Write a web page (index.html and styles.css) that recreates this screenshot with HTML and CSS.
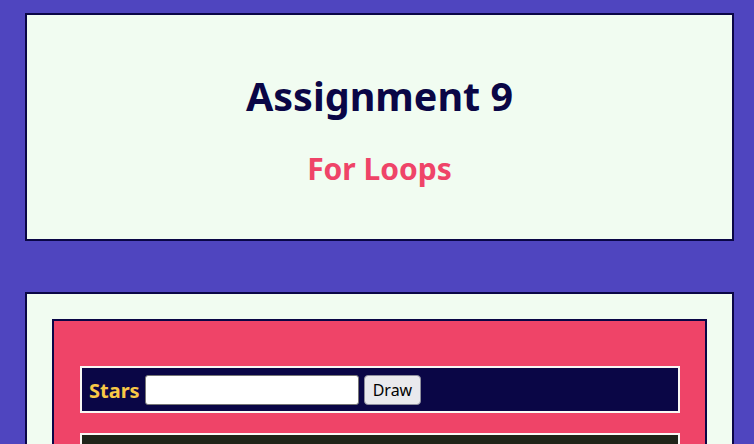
FILE: index.html
```html
<!DOCTYPE html>
<html lang="en">
<head>
<meta charset="utf-8">
<title>Assignment 9</title>
<link rel="stylesheet" href="styles.css">
</head>
<body>
  <header class="card header">
    <h1 class="title">Assignment 9</h1>
    <h2 class="subtitle">For Loops</h2>
  </header>
  <main class="card content">
    <section class="panel">
      <div class="bar bar-controls">
        <label class="label" for="stars">Stars</label>
        <input class="field" id="stars" type="text">
        <button class="btn" type="button">Draw</button>
      </div>
      <div class="bar bar-output"></div>
    </section>
  </main>
</body>
</html>
```

FILE: styles.css
```css
html, body {
  margin: 0;
}
body {
  background: #4f45bf;
  padding: 13px 20px 0 25px;
  font-family: "Noto Sans", "Open Sans", sans-serif;
}
.card {
  border: 2px solid #0a0646;
  background: #f1fcf1;
}
.header {
  box-sizing: border-box;
  height: 228px;
  text-align: center;
  padding-top: 54px;
}
.title {
  margin: 0;
  font-size: 39.5px;
  line-height: 54px;
  font-weight: 700;
  color: #0a0646;
}
.subtitle {
  margin: 27px 0 0;
  font-size: 30px;
  line-height: 38px;
  font-weight: 700;
  color: #ef4468;
}
.content {
  margin-top: 51px;
  padding: 25px;
}
.panel {
  background: #ef4468;
  border: 2px solid #0a0646;
  padding: 25px 25px 25px 26px;
}
.bar {
  border: 2px solid #f8f8f4;
  margin: 20px 0;
}
.bar-controls {
  background: #0a0646;
  display: flex;
  align-items: center;
  gap: 5px;
  padding: 7px 7px 6px 7px;
}
.bar-output {
  background: #1f2419;
  height: 200px;
}
.label {
  color: #f9c846;
  font-weight: 700;
  font-size: 20px;
}
.field {
  box-sizing: border-box;
  width: 214px;
  height: 30px;
  border: 1px solid #767676;
  border-radius: 3px;
  background: #fff;
  margin: 0;
}
.btn {
  box-sizing: border-box;
  height: 30px;
  padding: 0 8px;
  margin: 0;
  border: 1px solid #8f8f9d;
  border-radius: 4px;
  background: #e9e9ed;
  color: #000;
  font-family: "Noto Sans", "Open Sans", sans-serif;
  font-size: 16px;
}
```
